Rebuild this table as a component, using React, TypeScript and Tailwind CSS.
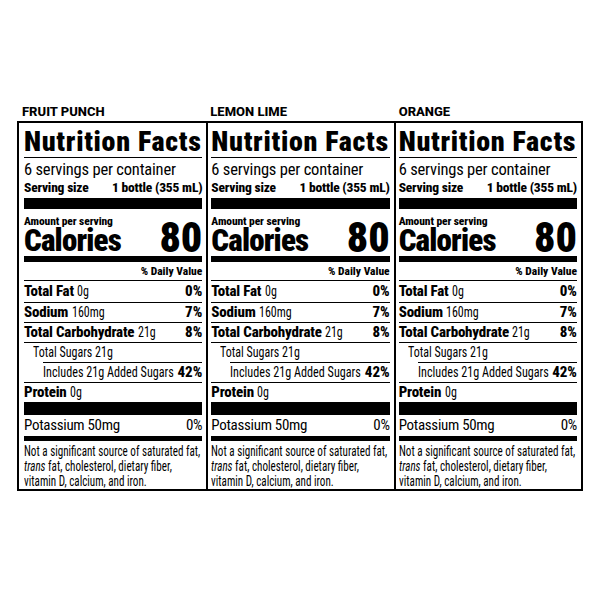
const flavors = ["FRUIT PUNCH", "LEMON LIME", "ORANGE"];

// regular weight in the label is much narrower than Roboto's narrowest width
const Narrow = ({ children }: { children: React.ReactNode }) => (
  <span className="inline-block origin-left scale-x-[0.8] whitespace-nowrap">{children}</span>
);

const Row = ({ label, amount, dv, h = "h-[20px]" }: { label: string; amount: string; dv: string; h?: string }) => (
  <div className={`flex ${h} items-center justify-between border-b border-black`}>
    <span className="whitespace-nowrap">
      <span className="font-extrabold tracking-[-0.2px]">{label}</span> <Narrow>{amount}</Narrow>
    </span>
    <span className="font-extrabold">{dv}</span>
  </div>
);

const Panel = ({ first }: { first?: boolean }) => (
  <div
    className={`min-w-0 flex-1 pr-[4px] [font-stretch:75%] ${first ? "pl-[5px]" : "border-l-2 border-black pl-[3px]"}`}
  >
    <div className="h-[35px] whitespace-nowrap border-b border-black pt-[4px] text-[28px] font-black leading-[30px] tracking-[0.7px] [font-stretch:87%]">
      Nutrition Facts
    </div>
    <div className="mt-[3px] text-[16.5px] leading-[17px] tracking-[-0.2px]">6 servings per container</div>
    <div className="flex justify-between text-[13.5px] font-extrabold leading-[18px] tracking-[-0.2px]">
      <span>Serving size</span>
      <span>1 bottle (355 mL)</span>
    </div>
    <div className="mt-[2px] h-[11px] bg-black" />
    <div className="mt-[6px] text-[11.5px] font-extrabold leading-[12px] tracking-[-0.1px]">Amount per serving</div>
    <div className="flex h-[29px] items-end justify-between font-black">
      <span className="text-[31px] leading-[30px] tracking-[-0.8px]">Calories</span>
      <span className="text-[42px] leading-[36px] [font-stretch:78%]">80</span>
    </div>
    <div className="h-[6px] bg-black" />
    <div className="h-[19px] border-b border-black pt-[2px] text-right text-[11.5px] font-extrabold leading-[14px]">
      % Daily Value
    </div>
    <div className="text-[15px] leading-[19px]">
      <Row label="Total Fat" amount="0g" dv="0%" h="h-[22px]" />
      <Row label="Sodium" amount="160mg" dv="7%" />
      <Row label="Total Carbohydrate" amount="21g" dv="8%" />
      <div className="flex h-[19px] items-center pl-[9px]">
        <Narrow>Total Sugars 21g</Narrow>
      </div>
      <div className="ml-[19px] h-px bg-black" />
      <div className="flex h-[20px] items-center justify-between border-b border-black pl-[19px]">
        <span className="w-[124px]">
          <span className="inline-block origin-left scale-x-[0.81] whitespace-nowrap">Includes 21g Added Sugars</span>
        </span>
        <span className="font-extrabold">42%</span>
      </div>
      <div className="flex h-[19px] items-center">
        <span className="whitespace-nowrap">
          <span className="font-extrabold tracking-[-0.2px]">Protein</span> <Narrow>0g</Narrow>
        </span>
      </div>
      <div className="h-[13px] bg-black" />
      <div className="flex h-[21px] items-center justify-between tracking-[-0.3px]">
        <span>Potassium 50mg</span>
        <span>0%</span>
      </div>
      <div className="h-[5px] bg-black" />
      <p className="w-[135%] origin-left scale-x-[0.765] whitespace-nowrap pt-[3px] text-[14.5px] leading-[15px]">
        Not a significant source of saturated fat,
        <br />
        <i>trans</i> fat, cholesterol, dietary fiber,
        <br />
        vitamin D, calcium, and iron.
      </p>
    </div>
  </div>
);

export default function App() {
  return (
    <div className="h-[600px] w-[600px] bg-white pl-[17px] pt-[103px] font-['Roboto',sans-serif] text-black">
      <div className="flex w-[566px]">
        {flavors.map((f, i) => (
          <div
            key={f}
            className={`flex-1 text-[13px] font-extrabold leading-[18px] [font-stretch:94%] ${i === 0 ? "pl-[5px]" : "pl-[4px]"}`}
          >
            {f}
          </div>
        ))}
      </div>
      <div className="flex h-[370px] w-[566px] border-2 border-black">
        {flavors.map((f, i) => (
          <Panel key={f} first={i === 0} />
        ))}
      </div>
    </div>
  );
}
